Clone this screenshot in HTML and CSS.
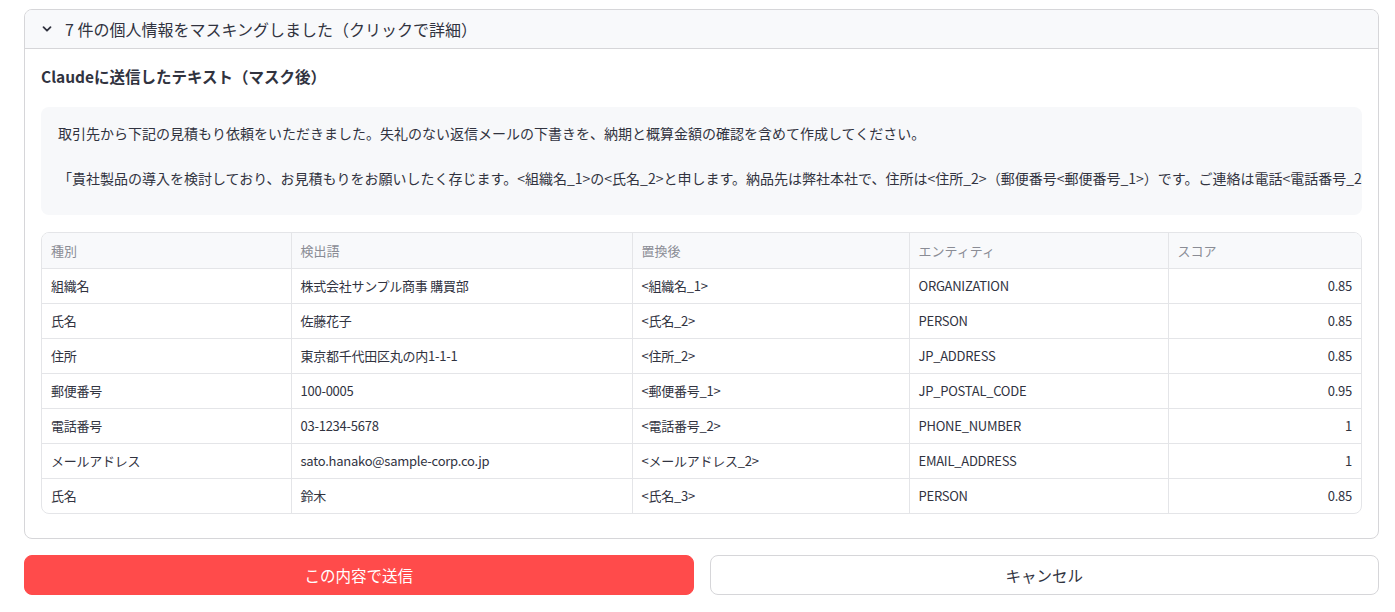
FILE: index.html
```html
<!DOCTYPE html>
<html>
<head>
  <title>マスキング結果</title>
  <link rel="stylesheet" href="styles.css">
</head>
<body>
  <div class="page">
    <div class="expander">
      <div class="expander-header">
        <svg class="chevron" width="12" height="12" viewBox="0 0 12 12">
          <path d="M2.5 4.2 L6 7.7 L9.5 4.2" fill="none" stroke="#31333f" stroke-width="1.8" stroke-linecap="round" stroke-linejoin="round"/>
        </svg>
        <span class="expander-title">7 件の個人情報をマスキングしました（クリックで詳細）</span>
      </div>
      <div class="expander-body">
        <div class="section-title">Claudeに送信したテキスト（マスク後）</div>
        <div class="code-block">
          <pre>取引先から下記の見積もり依頼をいただきました。失礼のない返信メールの下書きを、納期と概算金額の確認を含めて作成してください。

「貴社製品の導入を検討しており、お見積もりをお願いしたく存じます。&lt;組織名_1&gt;の&lt;氏名_2&gt;と申します。納品先は弊社本社で、住所は&lt;住所_2&gt;（郵便番号&lt;郵便番号_1&gt;）です。ご連絡は電話&lt;電話番号_2&gt;またはメール&lt;メールアドレス_2&gt;までお願いいたします。担当は&lt;氏名_3&gt;です。」
</pre>
        </div>

        <div class="grid">
          <table>
            <colgroup>
              <col class="c1"><col class="c2"><col class="c3"><col class="c4"><col class="c5">
            </colgroup>
            <thead>
              <tr><th>種別</th><th>検出語</th><th>置換後</th><th>エンティティ</th><th>スコア</th></tr>
            </thead>
            <tbody>
              <tr><td>組織名</td><td>株式会社サンプル商事 購買部</td><td>&lt;組織名_1&gt;</td><td>ORGANIZATION</td><td class="num">0.85</td></tr>
              <tr><td>氏名</td><td>佐藤花子</td><td>&lt;氏名_2&gt;</td><td>PERSON</td><td class="num">0.85</td></tr>
              <tr><td>住所</td><td>東京都千代田区丸の内1-1-1</td><td>&lt;住所_2&gt;</td><td>JP_ADDRESS</td><td class="num">0.85</td></tr>
              <tr><td>郵便番号</td><td>100-0005</td><td>&lt;郵便番号_1&gt;</td><td>JP_POSTAL_CODE</td><td class="num">0.95</td></tr>
              <tr><td>電話番号</td><td>03-1234-5678</td><td>&lt;電話番号_2&gt;</td><td>PHONE_NUMBER</td><td class="num">1</td></tr>
              <tr><td>メールアドレス</td><td>sato.hanako@sample-corp.co.jp</td><td>&lt;メールアドレス_2&gt;</td><td>EMAIL_ADDRESS</td><td class="num">1</td></tr>
              <tr><td>氏名</td><td>鈴木</td><td>&lt;氏名_3&gt;</td><td>PERSON</td><td class="num">0.85</td></tr>
            </tbody>
          </table>
        </div>
      </div>
    </div>

    <div class="actions">
      <button class="btn primary">この内容で送信</button>
      <button class="btn secondary">キャンセル</button>
    </div>
  </div>
</body>
</html>
```

FILE: styles.css
```css
* {
  box-sizing: border-box;
}

body {
  margin: 0;
  background: #fff;
  color: #31333f;
  font-family: "Noto Sans CJK JP", "Noto Sans", sans-serif;
}

.page {
  padding: 9px 16px 0 24px;
}

.expander {
  border: 1px solid #d6d6d9;
  border-radius: 8px;
  overflow: hidden;
}

.expander-header {
  display: flex;
  align-items: center;
  height: 39px;
  padding: 0 16px;
  background: #f8f9fb;
  border-bottom: 1px solid #d6d6d9;
}

.chevron {
  margin-right: 12px;
}

.expander-title {
  font-size: 16px;
  color: #31333f;
}

.expander-body {
  padding: 15px 16px 24px 16px;
}

.section-title {
  font-size: 15.5px;
  font-weight: bold;
  margin-bottom: 19px;
  line-height: 24px;
}

.code-block {
  background: #f7f8fa;
  border-radius: 8px;
  padding: 15px 17px 4px 17px;
  overflow: hidden;
  margin-bottom: 17px;
  height: 108px;
}

.code-block pre {
  margin: 0;
  font-family: "Noto Sans CJK JP", "Noto Sans", sans-serif;
  font-size: 14px;
  line-height: 22.5px;
  white-space: pre;
  color: #31333f;
}

.grid {
  border: 1px solid #e4e5e8;
  border-radius: 8px;
  overflow: hidden;
}

.grid table {
  width: 100%;
  border-collapse: collapse;
  table-layout: fixed;
  font-size: 13px;
}

.c1 { width: 249px; }
.c2 { width: 341px; }
.c3 { width: 277px; }
.c4 { width: 259px; }
.c5 { width: auto; }

.grid th,
.grid td {
  height: 35px;
  padding: 0 9px;
  text-align: left;
  border-right: 1px solid #e4e5e8;
  border-bottom: 1px solid #e4e5e8;
  white-space: nowrap;
  overflow: hidden;
}

.grid th {
  background: #f8f9fb;
  color: #8a8c95;
  font-weight: normal;
}

.grid td {
  color: #31333f;
  letter-spacing: -0.25px;
}

.grid th:last-child,
.grid td:last-child {
  border-right: none;
}

.grid tbody tr:last-child td {
  border-bottom: none;
}

.grid td.num {
  text-align: right;
}

.actions {
  display: flex;
  gap: 16px;
  margin-top: 16px;
}

.btn {
  flex: 1;
  height: 40px;
  border-radius: 8px;
  font-family: "Noto Sans CJK JP", "Noto Sans", sans-serif;
  font-size: 15.5px;
  cursor: pointer;
}

.primary {
  background: #ff4b4b;
  border: 1px solid #ff4b4b;
  color: #fff;
}

.secondary {
  background: #fff;
  border: 1px solid #d6d6d9;
  color: #31333f;
}
```
